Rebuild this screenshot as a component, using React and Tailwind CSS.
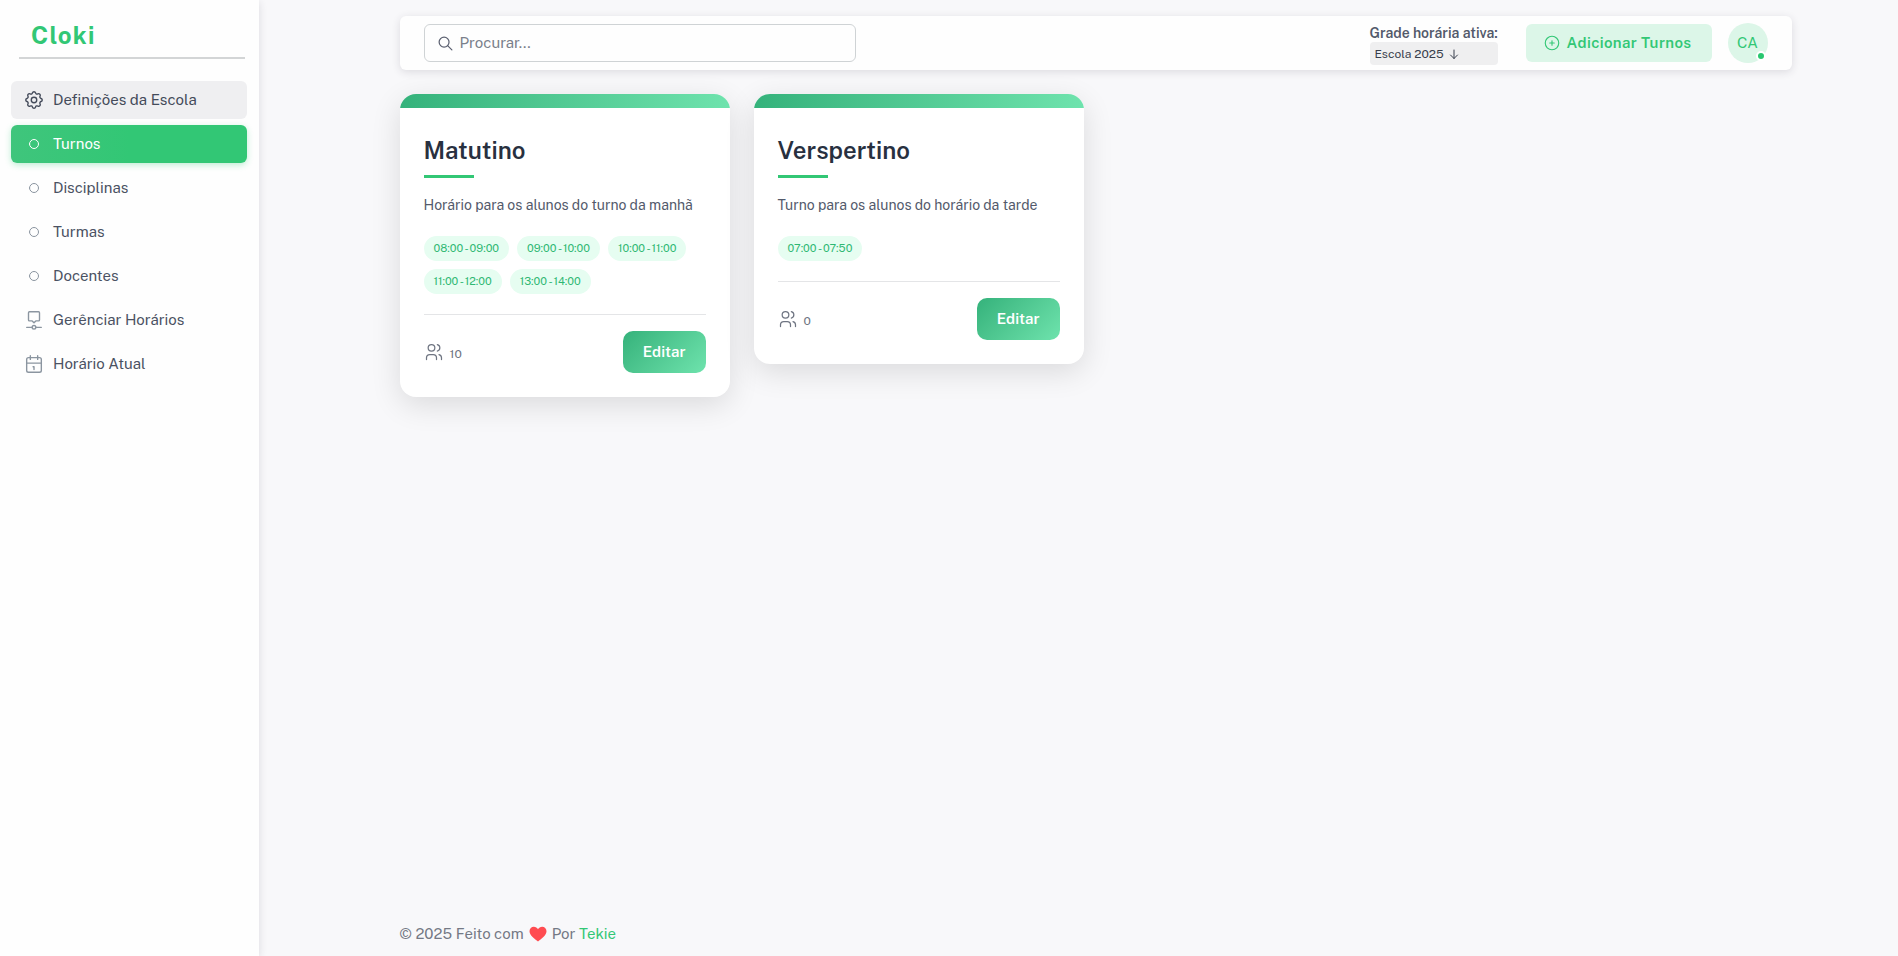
import React from "react";
import {
  TbSettings,
  TbCircle,
  TbTimelineEvent,
  TbSearch,
  TbCirclePlus,
  TbUsers,
} from "react-icons/tb";

function CalendarIcon({ size, strokeWidth }) {
  return (
    <svg
      viewBox="0 0 24 24"
      width={size}
      height={size}
      fill="none"
      stroke="currentColor"
      strokeWidth={strokeWidth}
      strokeLinecap="round"
      strokeLinejoin="round"
      aria-hidden="true"
    >
      <rect x="4" y="5" width="16" height="16" rx="2" />
      <path d="M16 3v4M8 3v4M4 11h16M11 15h1v3" />
    </svg>
  );
}

function ArrowDownIcon() {
  return (
    <svg
      viewBox="0 0 12 12"
      className="size-3"
      fill="none"
      stroke="currentColor"
      strokeLinecap="round"
      strokeLinejoin="round"
      aria-hidden="true"
    >
      <path d="M6 2v8.500M2.500 7L6 10.500L9.500 7" />
    </svg>
  );
}

const menu = [
  { label: "Definições da Escola", icon: TbSettings, state: "open" },
  { label: "Turnos", icon: TbCircle, small: true, state: "active" },
  { label: "Disciplinas", icon: TbCircle, small: true },
  { label: "Turmas", icon: TbCircle, small: true },
  { label: "Docentes", icon: TbCircle, small: true },
  { label: "Gerênciar Horários", icon: TbTimelineEvent },
  { label: "Horário Atual", icon: CalendarIcon },
];

const shifts = [
  {
    name: "Matutino",
    description: "Horário para os alunos do turno da manhã",
    slots: ["08:00 - 09:00", "09:00 - 10:00", "10:00 - 11:00", "11:00 - 12:00", "13:00 - 14:00"],
    students: 10,
  },
  {
    name: "Verspertino",
    description: "Turno para os alunos do horário da tarde",
    slots: ["07:00 - 07:50"],
    students: 0,
  },
];

const itemStyles = {
  open: "bg-[#efeff1] text-[#444b5a]",
  active: "bg-gradient-to-r from-[#3fc57c] to-[#32c775] to-50% text-white shadow-[0_2px_6px_rgba(40,199,111,0.3)]",
  idle: "text-[#4b5263]",
};

const iconStyles = {
  open: "text-[#444b5a]",
  active: "text-white",
  idle: "text-[#8b95a0]",
};

function Sidebar() {
  return (
    <aside className="w-[259px] shrink-0 bg-[#fefefe] shadow-[0_2px_8px_rgba(47,43,61,0.14)]">
      <div className="mr-[14px] ml-[19px] border-b-2 border-[#d3d5d6] px-3 pt-[21px] pb-2">
        <a href="#" className="block text-2xl leading-7 font-bold tracking-wider text-[#32c775]">
          Cloki
        </a>
      </div>
      <nav className="mt-[22px] flex flex-col gap-[6px] pr-3 pl-[11px]">
        {menu.map(({ label, icon: Icon, small, state = "idle" }) => (
          <a
            key={label}
            href="#"
            className={`flex h-[38px] items-center gap-2 rounded-md px-3 ${itemStyles[state]}`}
          >
            <span className={`flex w-[22px] justify-center ${iconStyles[state]}`}>
              <Icon size={small ? 12 : 22} strokeWidth={small ? 2 : 1.5} />
            </span>
            {label}
          </a>
        ))}
      </nav>
    </aside>
  );
}

function TopBar() {
  return (
    <header className="flex h-[54px] items-center rounded-md bg-[#fefefe] px-6 shadow-[0_2px_8px_rgba(47,43,61,0.14)]">
      <div className="flex h-[38px] w-[432px] items-center gap-[6px] rounded-md border border-[#cfd3d5] px-3">
        <TbSearch size={17} className="text-[#5b6070]" strokeWidth={1.75} />
        <input
          type="text"
          aria-label="Procurar"
          placeholder="Procurar..."
          className="min-w-0 flex-1 bg-transparent outline-none placeholder:text-[#7a808b]"
        />
      </div>
      <div className="ml-auto flex items-center">
        <div className="mr-7 w-32 pt-[3px]">
          <span className="block text-sm leading-[18px] font-semibold whitespace-nowrap text-[#535a6b]">
            Grade horária ativa:
          </span>
          <button
            type="button"
            className="flex h-[23px] w-full items-center gap-1 rounded bg-[#efeff0] px-[5px] text-xs text-[#383e4c]"
          >
            Escola 2025
            <ArrowDownIcon />
          </button>
        </div>
        <button
          type="button"
          className="mr-4 flex h-[38px] items-center gap-[6px] rounded-md bg-[#dcf6e8] pr-5 pl-[17px] font-semibold tracking-wide text-[#32c775]"
        >
          <TbCirclePlus size={18} strokeWidth={1.5} />
          Adicionar Turnos
        </button>
        <button
          type="button"
          className="relative flex size-10 items-center justify-center rounded-full bg-[#dcf6e8] text-[#32c775]"
        >
          CA
          <span className="absolute right-[2px] bottom-[2px] size-[10px] rounded-full border-2 border-white bg-[#28c76f]" />
        </button>
      </div>
    </header>
  );
}

function ShiftCard({ name, description, slots, students }) {
  return (
    <article className="overflow-hidden rounded-2xl bg-white shadow-[0_8px_30px_rgba(0,0,0,0.12)]">
      <div className="h-[14px] bg-gradient-to-r from-[#34b27b] to-[#6ee3ad]" />
      <div className="p-6">
        <h2 className="text-2xl leading-9 font-semibold text-[#28303f]">{name}</h2>
        <div className="mt-[7px] h-[3px] w-[50px] bg-[#32c775]" />
        <p className="mt-4 text-sm leading-[22px] text-[#535a6b]">{description}</p>
        <ul className="mt-5 flex flex-wrap gap-2">
          {slots.map((slot) => (
            <li
              key={slot}
              className="rounded-full bg-[#e6fdf1] px-[10px] text-[11px] leading-[25px] text-[#2fb873]"
            >
              {slot}
            </li>
          ))}
        </ul>
        <div className="mt-5 flex items-center justify-between border-t border-[#e4e5e7] pt-4">
          <div className="flex items-center gap-[6px] text-[#6f7582]">
            <TbUsers size={20} strokeWidth={1.5} />
            <span className="pt-1 text-xs">{students}</span>
          </div>
          <button
            type="button"
            className="h-[42px] rounded-[10px] bg-linear-135 from-[#34b27b] to-[#6ee3ad] px-5 font-semibold text-white"
          >
            Editar
          </button>
        </div>
      </div>
    </article>
  );
}

export default function App() {
  return (
    <div className="flex min-h-screen bg-[#f8f8fa] font-['Public_Sans','Inter',sans-serif] text-[15px] leading-[22px]">
      <Sidebar />
      <div className="flex min-w-0 flex-1 flex-col pl-[34px]">
        <div className="mx-auto flex w-full max-w-[1440px] flex-1 flex-col px-6 pt-4">
          <TopBar />
          <main className="mt-6 grid grid-cols-4 items-start gap-6">
            {shifts.map((shift) => (
              <ShiftCard key={shift.name} {...shift} />
            ))}
          </main>
          <footer className="mt-auto flex items-center gap-[5px] pb-[11px] text-[#747985]">
            © 2025 Feito com
            <svg viewBox="0 0 18 16" className="h-4 w-[18px]" aria-hidden="true">
              <path
                d="M9 15.500C6 13 .5 9.500.5 5.200C.5 2.500 2.500.7 4.800.7C6.600.7 8.200 1.700 9 3.200C9.800 1.700 11.400.7 13.200.7C15.500.7 17.500 2.500 17.500 5.200C17.500 9.500 12 13 9 15.500Z"
                fill="#ff4c51"
              />
            </svg>
            <span>
              Por{" "}
              <a href="#" className="text-[#32c775]">
                Tekie
              </a>
            </span>
          </footer>
        </div>
      </div>
    </div>
  );
}
